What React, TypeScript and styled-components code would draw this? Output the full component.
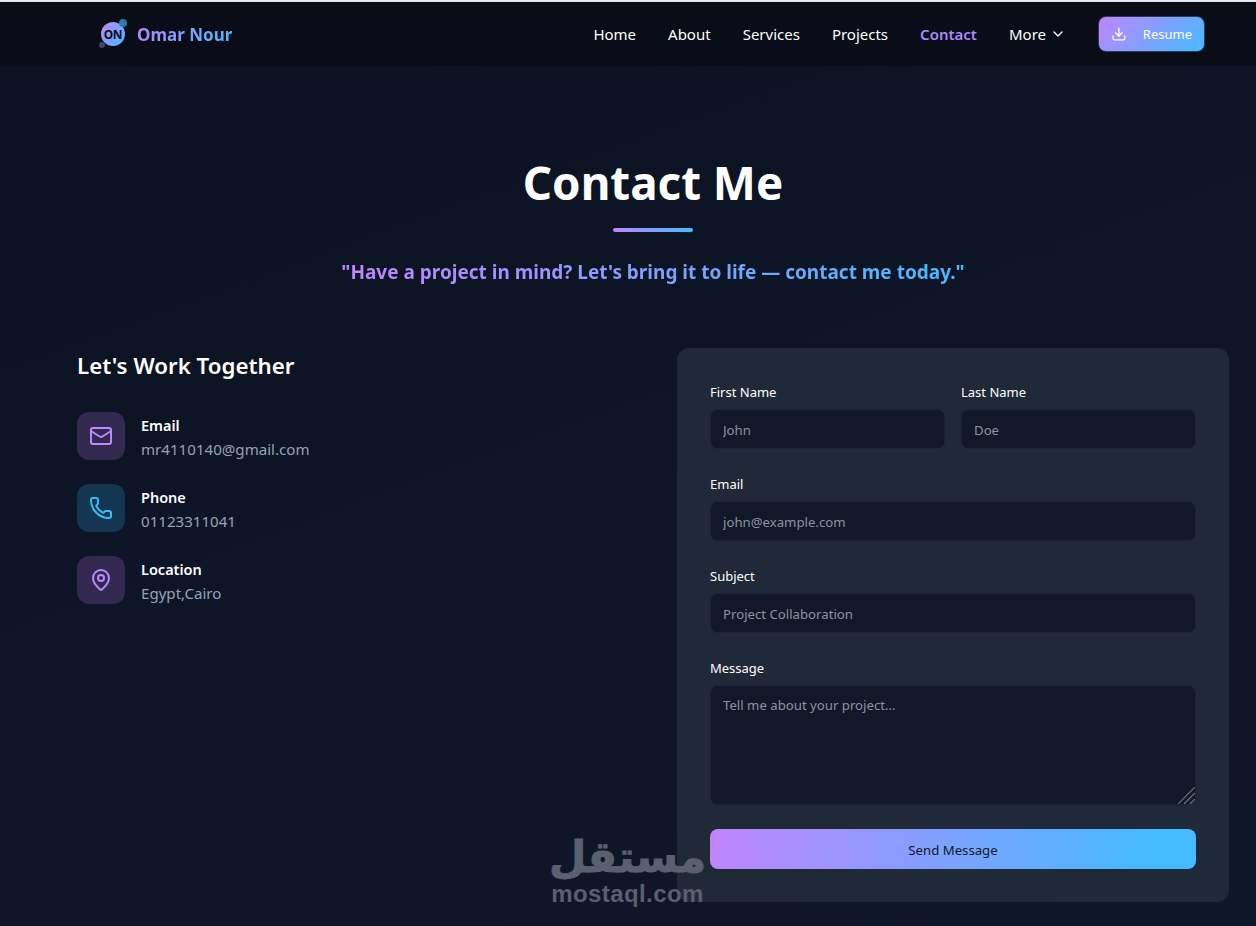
import React from 'react';
import styled, { createGlobalStyle } from 'styled-components';
import { ChevronDown, Download, Mail, MapPin, Phone } from 'lucide-react';

const GRADIENT = 'linear-gradient(135deg, #c084fc, #45bbff)';

const Global = createGlobalStyle`
  html, body {
    margin: 0;
    height: 926px;
    overflow: hidden;
  }
  body {
    background: linear-gradient(160deg, #0b1322, #0f172a);
    color: #fff;
    font-family: 'Noto Sans', 'Open Sans', sans-serif;
  }
  * {
    box-sizing: border-box;
  }
`;

const Page = styled.div`
  position: relative;
  height: 926px;
  overflow: hidden;
`;

const Nav = styled.nav`
  display: flex;
  align-items: center;
  justify-content: space-between;
  height: 66px;
  padding: 0 51px 0 101px;
  background: #0a0c17;
  border-top: 2px solid #e5e7eb;
`;

const Brand = styled.div`
  display: flex;
  align-items: center;
  gap: 12px;
`;

const LogoMark = styled.div`
  position: relative;
  display: flex;
  align-items: center;
  justify-content: center;
  width: 24px;
  height: 24px;
  border-radius: 50%;
  background: ${GRADIENT};
  color: #0a0c17;
  font-size: 12px;
  font-weight: 700;
  letter-spacing: -0.4px;
`;

const LogoDot = styled.span<{ $top: number; $left: number; $size: number; $color: string }>`
  position: absolute;
  top: ${(p) => p.$top}px;
  left: ${(p) => p.$left}px;
  width: ${(p) => p.$size}px;
  height: ${(p) => p.$size}px;
  border-radius: 50%;
  background: ${(p) => p.$color};
`;

const BrandName = styled.span`
  font-size: 17px;
  font-weight: 700;
  background: ${GRADIENT};
  -webkit-background-clip: text;
  background-clip: text;
  color: transparent;
`;

const Links = styled.div`
  display: flex;
  align-items: center;
  gap: 32px;
`;

const NavLink = styled.a<{ $active?: boolean }>`
  display: flex;
  align-items: center;
  gap: 4px;
  font-size: 15px;
  font-weight: ${(p) => (p.$active ? 600 : 400)};
  color: ${(p) => (p.$active ? '#a78bfa' : '#fff')};
`;

const ResumeButton = styled.button`
  display: flex;
  align-items: center;
  gap: 16px;
  width: 107px;
  height: 36px;
  padding: 0 12px;
  border: 1px solid #2c3a55;
  border-radius: 8px;
  background: ${GRADIENT};
  color: #fff;
  font: inherit;
  font-size: 13px;
`;

const Main = styled.main`
  width: 1152px;
  margin-left: 77px;
`;

const Header = styled.header`
  display: flex;
  flex-direction: column;
  align-items: center;
  padding-top: 82px;
`;

const Title = styled.h1`
  margin: 0;
  font-size: 45.7px;
  line-height: 68px;
  font-weight: 700;
`;

const Underline = styled.div`
  width: 80px;
  height: 4px;
  margin-top: 12px;
  border-radius: 2px;
  background: linear-gradient(90deg, #c084fc, #45bbff);
`;

const Subtitle = styled.p`
  margin: 26px 0 0;
  font-size: 19px;
  line-height: 28px;
  font-weight: 700;
  background: linear-gradient(90deg, #c084fc, #45bbff);
  -webkit-background-clip: text;
  background-clip: text;
  color: transparent;
`;

const Columns = styled.div`
  display: grid;
  grid-template-columns: 1fr 1fr;
  gap: 48px;
  margin-top: 62px;
`;

const Intro = styled.section`
  display: flex;
  flex-direction: column;
  gap: 24px;
`;

const IntroTitle = styled.h2`
  margin: 0 0 4px;
  font-size: 22.3px;
  line-height: 36px;
  font-weight: 600;
`;

const ContactRow = styled.div`
  display: flex;
  align-items: center;
  gap: 16px;
`;

const IconBox = styled.div<{ $tone: 'purple' | 'blue' }>`
  display: flex;
  align-items: center;
  justify-content: center;
  width: 48px;
  height: 48px;
  border-radius: 12px;
  background: ${(p) => (p.$tone === 'purple' ? '#332950' : '#153650')};
  color: ${(p) => (p.$tone === 'purple' ? '#b98afc' : '#38bdf8')};
`;

const RowText = styled.div`
  display: flex;
  flex-direction: column;
  height: 48px;
  padding-top: 1px;
`;

const RowLabel = styled.span`
  font-size: 14.5px;
  line-height: 24px;
  font-weight: 600;
`;

const RowValue = styled.span`
  font-size: 15.1px;
  line-height: 24px;
  color: #94a3b8;
`;

const FormCard = styled.form`
  display: flex;
  flex-direction: column;
  gap: 24px;
  height: 554px;
  padding: 33px;
  border-radius: 12px;
  background: #1f2937;
`;

const NameRow = styled.div`
  display: grid;
  grid-template-columns: 1fr 1fr;
  gap: 16px;
`;

const Field = styled.label`
  display: flex;
  flex-direction: column;
  gap: 7px;
  padding-top: 1px;
  font-size: 13px;
  line-height: 20px;
  color: #fff;
`;

const fieldStyle = `
  width: 100%;
  padding: 2px 12px 0;
  border: 1px solid #16233a;
  border-radius: 8px;
  background: #111827;
  color: #fff;
  font-family: inherit;
  font-size: 13.2px;
  outline: none;
  &::placeholder {
    color: #8b94a3;
    opacity: 1;
  }
`;

const Input = styled.input`
  height: 40px;
  ${fieldStyle}
`;

const TextAreaWrap = styled.div`
  position: relative;
  height: 120px;
`;

const TextArea = styled.textarea`
  display: block;
  height: 120px;
  ${fieldStyle}
  padding-top: 10px;
  resize: none;
`;

const ResizeGrip = styled.svg`
  position: absolute;
  right: 1px;
  bottom: 1px;
  width: 17px;
  height: 17px;
  pointer-events: none;
`;

const SendButton = styled.button`
  height: 40px;
  padding-top: 2px;
  border: 0;
  border-radius: 8px;
  background: linear-gradient(100deg, #c084fc, #45bbff 90%);
  color: #111827;
  font-family: inherit;
  font-size: 13.2px;
`;

const Watermark = styled.div`
  position: absolute;
  left: 551px;
  top: 832px;
  width: 153px;
  display: flex;
  flex-direction: column;
  align-items: center;
  color: #5a606d;
  pointer-events: none;
`;

const WatermarkArabic = styled.span`
  font-family: 'DejaVu Sans', sans-serif;
  font-size: 43px;
  line-height: 50px;
  font-weight: 700;
  -webkit-text-stroke: 1px #5a606d;
`;

const WatermarkLatin = styled.span`
  font-family: 'Liberation Sans', sans-serif;
  font-size: 24px;
  line-height: 24px;
  font-weight: 700;
  letter-spacing: 0.4px;
`;

const navItems = ['Home', 'About', 'Services', 'Projects'];

const contacts = [
  { label: 'Email', value: 'mr4110140@gmail.com', tone: 'purple' as const, Icon: Mail },
  { label: 'Phone', value: '01123311041', tone: 'blue' as const, Icon: Phone },
  { label: 'Location', value: 'Egypt,Cairo', tone: 'purple' as const, Icon: MapPin },
];

const App: React.FC = () => {
  return (
    <Page>
      <Global />
      <Nav>
        <Brand>
          <LogoMark>
            <LogoDot $top={-3} $left={18} $size={8} $color='#2a7ba8' />
            <LogoDot $top={20} $left={-2} $size={6} $color='#3d4766' />
            ON
          </LogoMark>
          <BrandName>Omar Nour</BrandName>
        </Brand>
        <Links>
          {navItems.map((item) => (
            <NavLink key={item}>{item}</NavLink>
          ))}
          <NavLink $active>Contact</NavLink>
          <NavLink>
            More <ChevronDown size={16} />
          </NavLink>
          <ResumeButton type='button'>
            <Download size={16} />
            Resume
          </ResumeButton>
        </Links>
      </Nav>
      <Main>
        <Header>
          <Title>Contact Me</Title>
          <Underline />
          <Subtitle>"Have a project in mind? Let's bring it to life — contact me today."</Subtitle>
        </Header>
        <Columns>
          <Intro>
            <IntroTitle>Let's Work Together</IntroTitle>
            {contacts.map(({ label, value, tone, Icon }) => (
              <ContactRow key={label}>
                <IconBox $tone={tone}>
                  <Icon size={24} strokeWidth={2} />
                </IconBox>
                <RowText>
                  <RowLabel>{label}</RowLabel>
                  <RowValue>{value}</RowValue>
                </RowText>
              </ContactRow>
            ))}
          </Intro>
          <FormCard>
            <NameRow>
              <Field>
                First Name
                <Input placeholder='John' />
              </Field>
              <Field>
                Last Name
                <Input placeholder='Doe' />
              </Field>
            </NameRow>
            <Field>
              Email
              <Input placeholder='john@example.com' />
            </Field>
            <Field>
              Subject
              <Input placeholder='Project Collaboration' />
            </Field>
            <Field>
              Message
              <TextAreaWrap>
                <TextArea placeholder='Tell me about your project...' />
                <ResizeGrip viewBox='0 0 17 17' fill='none' stroke='#6f737b' strokeWidth='1.2'>
                  <path d='M0 17 L17 0 M6 17 L17 6 M12 17 L17 12' />
                </ResizeGrip>
              </TextAreaWrap>
            </Field>
            <SendButton type='button'>Send Message</SendButton>
          </FormCard>
        </Columns>
      </Main>
      <Watermark>
        <WatermarkArabic>مستقل</WatermarkArabic>
        <WatermarkLatin>mostaql.com</WatermarkLatin>
      </Watermark>
    </Page>
  );
};

export default App;
